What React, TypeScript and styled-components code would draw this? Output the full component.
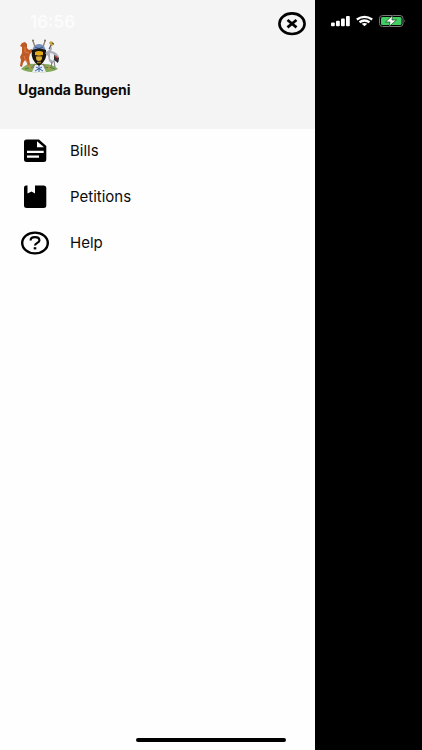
import React from "react";
import styled, { createGlobalStyle } from "styled-components";

const GlobalStyle = createGlobalStyle`
  * { box-sizing: border-box; }
  body { margin: 0; background: #000; }
`;

const Screen = styled.div`
  position: relative;
  display: grid;
  grid-template-columns: minmax(0, 1fr) 107px;
  min-height: 100vh;
  font-family: Inter, "Liberation Sans", sans-serif;
  color: #0b0b0b;
`;

const Drawer = styled.aside`
  background: #fefefe;
`;

const DrawerHeader = styled.header`
  display: flex;
  justify-content: space-between;
  align-items: flex-start;
  height: 129px;
  padding: 12px 9px 0 18px;
  background: #f4f4f4;
`;

const Brand = styled.div`
  display: flex;
  flex-direction: column;
  align-items: flex-start;
`;

const Clock = styled.time`
  margin-left: 12px;
  font-size: 17px;
  line-height: 20px;
  font-weight: 600;
  color: #fcfcfc;
`;

const Crest = styled.svg`
  display: block;
  width: 42px;
  height: 36px;
  margin-top: 6px;
`;

const Title = styled.h1`
  margin: 6px 0 0;
  font-size: 14px;
  line-height: 20px;
  font-weight: 700;
  white-space: nowrap;
`;

const CloseButton = styled.button`
  display: block;
  padding: 0;
  border: 0;
  background: none;
  cursor: pointer;
`;

const Menu = styled.nav`
  display: flex;
  flex-direction: column;
`;

const MenuItem = styled.a`
  display: flex;
  align-items: center;
  gap: 20px;
  height: 46px;
  padding: 0 20px 2px;
  font-size: 15px;
  line-height: 20px;
  color: inherit;
  text-decoration: none;
`;

const Glyph = styled.svg<{ $w: number; $h: number }>`
  display: block;
  flex: none;
  width: ${(p) => p.$w}px;
  height: ${(p) => p.$h}px;
`;

const StatusArea = styled.div`
  display: flex;
  justify-content: flex-end;
  align-items: flex-start;
  gap: 6px;
  padding: 14px 16px 0 0;
  background: #000;
`;

const HomeIndicator = styled.div`
  position: absolute;
  bottom: 8px;
  left: 50%;
  width: 150px;
  height: 4px;
  margin-left: -75px;
  border-radius: 2px;
  background: #000;
`;

const CrestDrawing = () => (
  <Crest viewBox="0 0 42 36" role="img" aria-label="Coat of arms">
    <path d="M3 31 Q9 25 16 26 L26 26 Q35 26 40 31 Q32 35 21 34 Q10 35 3 31Z" fill="#84a957" />
    <path d="M7 31 Q13 28 18 30 M26 30 Q32 28 37 31" stroke="#4f7c3d" strokeWidth="1" fill="none" />
    <path d="M17 27 L25 27 L28 34 L14 34Z" fill="#e6edf8" />
    <path d="M18 29 L25 33 M24 29 L17 33 M21 28 V34" stroke="#3d5f9f" strokeWidth="1" />
    <path d="M2 8 L4 5 L7 4 L9 6 L9 10 L11 12 L14 11 L15 13 L12 16 L11 20 L12 26 L10 28 L9 25 L7 22 L5 25 L4 29 L2 28 L3 22 L2 19 L4 15 L4 9Z" fill="#bd5a25" />
    <path d="M7 9 L7 14 L11 15 M6 18 L7 21 L10 25" stroke="#df824a" strokeWidth="1" fill="none" />
    <path d="M15 3 L18 12 M27 3 L24 12 M17 26 L14 30 M25 26 L28 30" stroke="#8f7e68" strokeWidth="1.3" />
    <circle cx="15" cy="2.5" r="1" fill="#766b62" />
    <circle cx="27" cy="2.500" r="1" fill="#766b62" />
    <path d="M15 10 Q17 6 21 6 Q25 6 27 10 L28 14 H14Z" fill="#7590bd" />
    <path d="M17 9 L25 12 M25 9 L17 12" stroke="#354d82" strokeWidth=".8" />
    <path d="M14 12 Q21 9 28 12 Q30 22 21 28 Q12 22 14 12Z" fill="#17130d" />
    <path d="M17 14 Q21 12 25 14 L25 17 H17Z" fill="#e2a91a" />
    <circle cx="21" cy="20" r="3" fill="#d9ad39" />
    <path d="M17 18 H25" stroke="#5b3e10" strokeWidth="1" />
    <path d="M19 24.500 H23" stroke="#a67817" strokeWidth="1.5" />
    <path d="M33 6 L34 11 L33 13 Q39 14 41 19 L41 24 L37 22 L34 26 L31 23 L30 18 L27 15 L31 12Z" fill="#a9adb8" />
    <path d="M32 15 Q36 15 37 19 L35 23 L32 21Z" fill="#eeeeF1" />
    <path d="M36 17 L41 20 L40 25 L36 22Z" fill="#332c33" />
    <path d="M37 18 L40 20" stroke="#cf4836" strokeWidth="1.5" />
    <path d="M31 5 Q32 2 35 4 L36 7 L33 8Z" fill="#c7a23d" />
    <path d="M34 5 L36 6 M33 7 L31 11" stroke="#484350" strokeWidth="1" />
    <path d="M34 24 L33 29 M36 23 L37 29" stroke="#77777f" strokeWidth="1" />
    <path d="M10 28 L13 30 M32 28 L30 31" stroke="#d69748" strokeWidth="1.3" />
  </Crest>
);

const BillsIcon = () => (
  <Glyph $w={30} $h={24} viewBox="0 0 30 24" aria-hidden="true">
    <path fillRule="evenodd" fill="#000" d="M6.500 .500H19L26.300 7V20.500Q26.300 23 23.500 23H6.800Q4 23 4 20.500V2.800Q4 .500 6.500 .500ZM17 2.200V8.300H24ZM7 11.700V14H23.700V11.700ZM7 16.400V18.700H19V16.400Z" />
  </Glyph>
);

const PetitionsIcon = () => (
  <Glyph $w={30} $h={24} viewBox="0 0 30 24" aria-hidden="true">
    <path fill="#000" d="M6 .500H7.500V8.500L11.500 6.500L15 8.500V.500H23.500Q26.300 .500 26.300 3V20.500Q26.300 23 23.500 23H6.800Q4 23 4 20.500V2.800Q4 .500 6 .500Z" />
  </Glyph>
);

const HelpIcon = () => (
  <Glyph $w={30} $h={24} viewBox="0 0 30 24" fill="none" stroke="#000" aria-hidden="true">
    <ellipse cx="15" cy="12" rx="12.800" ry="10.400" strokeWidth="2.400" />
    <path d="M10.600 9.500C10.600 7.300 12.500 6.200 15 6.200S19.400 7.400 19.400 9.400C19.400 11.800 15 12 15 14.600" strokeWidth="2.200" />
    <path d="M13.700 17.300H16.300" strokeWidth="2.200" />
  </Glyph>
);

const items = [
  { label: "Bills", Icon: BillsIcon },
  { label: "Petitions", Icon: PetitionsIcon },
  { label: "Help", Icon: HelpIcon },
];

export default function App() {
  return (
    <>
      <GlobalStyle />
      <Screen>
        <Drawer>
          <DrawerHeader>
            <Brand>
              <Clock>16:56</Clock>
              <CrestDrawing />
              <Title>Uganda Bungeni</Title>
            </Brand>
            <CloseButton type="button" aria-label="Close menu">
              <Glyph $w={28} $h={24} viewBox="0 0 28 24" fill="none" stroke="#000">
                <ellipse cx="14" cy="11.700" rx="12.600" ry="10.300" strokeWidth="2.600" />
                <path d="M9.500 8L18.500 15.400M18.500 8L9.500 15.400" strokeWidth="2.700" />
              </Glyph>
            </CloseButton>
          </DrawerHeader>
          <Menu aria-label="Main">
            {items.map(({ label, Icon }) => (
              <MenuItem href="#" key={label}>
                <Icon />
                {label}
              </MenuItem>
            ))}
          </Menu>
        </Drawer>
        <StatusArea>
          <Glyph $w={19} $h={14} viewBox="0 0 19 14" fill="#fff" aria-label="Signal">
            <rect x="0" y="8.500" width="3.800" height="3.800" rx="1" />
            <rect x="5" y="6.700" width="3.800" height="5.600" rx="1" />
            <rect x="10" y="4.500" width="3.800" height="7.800" rx="1" />
            <rect x="15" y="2" width="3.800" height="10.300" rx="1" />
          </Glyph>
          <Glyph $w={17} $h={14} viewBox="0 0 17 14" fill="none" stroke="#fff" strokeWidth="2.300" aria-label="Wi-Fi">
            <path d="M.8 5.500Q8.500 .200 16.200 5.500M3.500 8.300Q8.500 4.700 13.500 8.300" />
            <path d="M5.700 9.800Q8.500 8 11.300 9.800L8.500 12.300Z" fill="#fff" stroke="none" />
          </Glyph>
          <Glyph $w={27} $h={14} viewBox="0 0 27 14" aria-label="Battery charging">
            <rect x=".500" y="1.500" width="23.500" height="11" rx="3" fill="none" stroke="#777" />
            <rect x="2" y="3" width="20.500" height="8" rx="1.500" fill="#3fcf60" />
            <path d="M25.500 5.500Q27 7 25.500 8.500Z" fill="#888" />
            <path d="M13.500 1.500L6.500 8H11L10 12.500L17.500 6H13Z" fill="#fff" stroke="#12391c" strokeWidth=".700" />
          </Glyph>
        </StatusArea>
        <HomeIndicator />
      </Screen>
    </>
  );
}
